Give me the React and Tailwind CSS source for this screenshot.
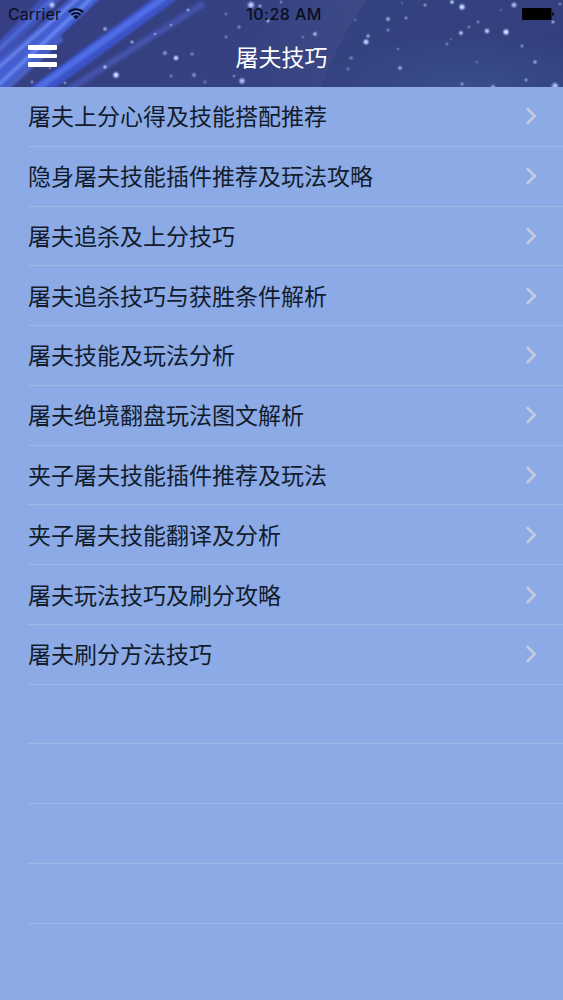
import React from "react";

const tips = [
  "屠夫上分心得及技能搭配推荐",
  "隐身屠夫技能插件推荐及玩法攻略",
  "屠夫追杀及上分技巧",
  "屠夫追杀技巧与获胜条件解析",
  "屠夫技能及玩法分析",
  "屠夫绝境翻盘玩法图文解析",
  "夹子屠夫技能插件推荐及玩法",
  "夹子屠夫技能翻译及分析",
  "屠夫玩法技巧及刷分攻略",
  "屠夫刷分方法技巧",
];

const EMPTY_ROWS = 4;

// x, y, radius, opacity
const stars = [
  [52, 5, 3, 0.8],
  [105, 29, 2.2, 0.6],
  [132, 42, 1.8, 0.6],
  [155, 34, 1.5, 0.5],
  [171, 25, 1.4, 0.5],
  [188, 10, 1.6, 0.6],
  [165, 53, 2.3, 0.5],
  [176, 58, 2.6, 0.9],
  [105, 67, 2, 0.7],
  [116, 75, 3, 1],
  [32, 82, 1.8, 0.4],
  [50, 68, 1.5, 0.4],
  [65, 83, 1.5, 0.5],
  [171, 76, 1.8, 0.35],
  [192, 54, 2, 0.4],
  [194, 75, 2.4, 0.45],
  [205, 82, 2, 0.3],
  [226, 37, 1.8, 0.35],
  [239, 27, 2, 0.4],
  [226, 14, 1.8, 0.3],
  [251, 5, 3.4, 0.85],
  [260, 6, 2, 0.5],
  [268, 21, 2, 0.6],
  [281, 2, 1.6, 0.4],
  [315, 34, 2.3, 0.65],
  [303, 37, 1.6, 0.3],
  [242, 81, 3, 0.8],
  [234, 76, 1.7, 0.4],
  [351, 58, 2.2, 0.35],
  [348, 69, 2, 0.3],
  [366, 42, 2.8, 0.9],
  [368, 36, 2, 0.6],
  [355, 20, 1.4, 0.3],
  [388, 19, 2.3, 0.6],
  [388, 30, 1.8, 0.4],
  [406, 18, 1.8, 0.45],
  [398, 49, 1.5, 0.3],
  [400, 68, 2.2, 0.6],
  [425, 5, 1.8, 0.5],
  [402, 3, 1.3, 0.25],
  [452, 2, 2.2, 0.75],
  [462, 7, 3, 0.95],
  [461, 33, 2.3, 0.75],
  [447, 44, 1.8, 0.35],
  [451, 39, 1.3, 0.25],
  [469, 27, 1.7, 0.35],
  [478, 22, 1.7, 0.4],
  [487, 31, 2.6, 0.8],
  [506, 32, 3, 1],
  [514, 5, 2.7, 0.75],
  [501, 10, 1.3, 0.25],
  [522, 46, 1.8, 0.45],
  [535, 62, 2.1, 0.55],
  [526, 80, 2, 0.45],
  [553, 22, 1.8, 0.6],
  [560, 4, 1.7, 0.35],
  [477, 62, 1.6, 0.25],
  [462, 84, 1.9, 0.45],
  [493, 87, 2.4, 0.6],
  [555, 86, 3.4, 0.8],
];

// x1, y1, x2, y2, color, width, opacity
const beams = [
  [-12, 63, 58, -8, "#4157c4", 15, 0.8],
  [-10, 58, 60, -8, "#5472e4", 4, 0.75],
  [-12, 80, 88, -8, "#4660d8", 14, 0.9],
  [-10, 75, 83, -6, "#7493f4", 3, 0.75],
  [-8, 92, 100, -8, "#4462dc", 10, 0.95],
  [-6, 89, 96, -6, "#7898f6", 3, 0.75],
  [4, 91, 62, 38, "#5270e0", 5, 0.7],
  [34, 94, 176, -9, "#3c54cc", 15, 0.95],
  [38, 88, 172, -8, "#5474ec", 6, 0.8],
  [62, 94, 204, 3, "#4355b4", 8, 0.6],
  [68, 90, 204, 4, "#5a6fd0", 2, 0.4],
];

const NightSky = () => (
  <svg
    className="absolute inset-0 w-full h-full"
    viewBox="0 0 563 87"
    preserveAspectRatio="none"
    aria-hidden="true"
  >
    <defs>
      <linearGradient id="sky" x1="0" y1="0" x2="1" y2="0.15">
        <stop offset="0" stopColor="#363f83" />
        <stop offset="0.35" stopColor="#354080" />
        <stop offset="0.6" stopColor="#354280" />
        <stop offset="1" stopColor="#34407e" />
      </linearGradient>
      <radialGradient id="glow">
        <stop offset="0" stopColor="#3c5696" stopOpacity="0.6" />
        <stop offset="1" stopColor="#3c5696" stopOpacity="0" />
      </radialGradient>
      <radialGradient id="star">
        <stop offset="0" stopColor="#f0f6ff" />
        <stop offset="0.35" stopColor="#b6c8fa" />
        <stop offset="1" stopColor="#6b80d0" stopOpacity="0" />
      </radialGradient>
      <linearGradient id="band">
        <stop offset="0" stopColor="#4a5590" stopOpacity="0" />
        <stop offset="1" stopColor="#4a5590" stopOpacity="0.4" />
      </linearGradient>
      <filter id="soften" filterUnits="userSpaceOnUse" x="-20" y="-20" width="603" height="127">
        <feGaussianBlur stdDeviation="1" />
      </filter>
    </defs>
    <rect width="563" height="87" fill="url(#sky)" />
    <path d="M240 87 L280 0 H366 Q338 40 321 87Z" fill="url(#band)" />
    <ellipse cx="470" cy="86" rx="150" ry="50" fill="url(#glow)" />
    <g filter="url(#soften)">
      {beams.map(([x1, y1, x2, y2, color, width, opacity], i) => (
        <line
          key={i}
          x1={x1}
          y1={y1}
          x2={x2}
          y2={y2}
          stroke={color}
          strokeWidth={width}
          opacity={opacity}
        />
      ))}
    </g>
    {stars.map(([x, y, r, opacity], i) => (
      <circle key={i} cx={x} cy={y} r={r * 1.45} fill="url(#star)" opacity={opacity} />
    ))}
  </svg>
);

const WifiIcon = () => (
  <svg className="w-4 h-3" viewBox="0 0 16 12" fill="none" stroke="#090e20" strokeWidth="2">
    <path d="M0.8 4.3 A10.2 10.2 0 0 1 15.2 4.3" />
    <path d="M3.4 7 A6.5 6.5 0 0 1 12.6 7" />
    <path d="M5.3 8.6 A3.8 3.8 0 0 1 10.7 8.6 L8 11.3Z" fill="#090e20" stroke="none" />
  </svg>
);

const BatteryIcon = () => (
  <svg className="w-8 h-3" viewBox="0 0 32 12" fill="#000">
    <rect x="0" y="0" width="29.5" height="12" rx="1" />
    <path d="M30.3 4 Q32 4.5 32 6 Q32 7.5 30.3 8Z" />
  </svg>
);

const StatusBar = () => (
  <div className="grid grid-cols-[1fr_auto_1fr] items-center h-7 pl-2 pr-[9px] text-[#090e20]">
    <div className="flex items-center gap-[7px]">
      <span className="text-[16px] leading-7 tracking-[0.1px]">Carrier</span>
      <WifiIcon />
    </div>
    <span className="pl-[6px] text-center text-[16px] font-medium leading-7 tracking-[0.45px]">
      10:28 AM
    </span>
    <div className="flex justify-end">
      <BatteryIcon />
    </div>
  </div>
);

const Header = () => (
  <header className="relative h-[87px] shrink-0 overflow-hidden">
    <NightSky />
    <div className="relative">
      <StatusBar />
      <div className="grid grid-cols-[1fr_auto_1fr] items-center h-[59px] px-7">
        <button type="button" aria-label="Menu" className="flex flex-col gap-1 w-[29px] mb-[3px]">
          <span className="h-[4.5px] rounded-[1px] bg-white" />
          <span className="h-[4.5px] rounded-[1px] bg-white" />
          <span className="h-[4.5px] rounded-[1px] bg-white" />
        </button>
        <h1 className="pt-0.5 text-[23px] font-normal leading-none text-white">屠夫技巧</h1>
      </div>
    </div>
  </header>
);

const Chevron = () => (
  <svg className="w-3 h-[18px]" viewBox="0 0 12 18" fill="none" stroke="#c5cadd" strokeWidth="2.6">
    <path d="M1.8 1.2 L9.8 9 L1.8 16.8" />
  </svg>
);

const TipRow = ({ title }) => (
  <li className="h-[59.77px] pl-7">
    <div className="flex items-center justify-between h-full pr-[26.5px] border-b border-[#a0b9e4]">
      <span className="pt-[3px] text-[23px] leading-none text-[#121c2c]">{title}</span>
      {title && <Chevron />}
    </div>
  </li>
);

const App = () => {
  return (
    <div className="flex flex-col h-screen overflow-hidden bg-[#8caae6] font-[Inter,'Noto_Sans_CJK_SC',sans-serif]">
      <Header />
      <ul>
        {tips.map((title) => (
          <TipRow key={title} title={title} />
        ))}
        {Array.from({ length: EMPTY_ROWS }, (_, i) => (
          <TipRow key={i} />
        ))}
      </ul>
    </div>
  );
};

export default App;
